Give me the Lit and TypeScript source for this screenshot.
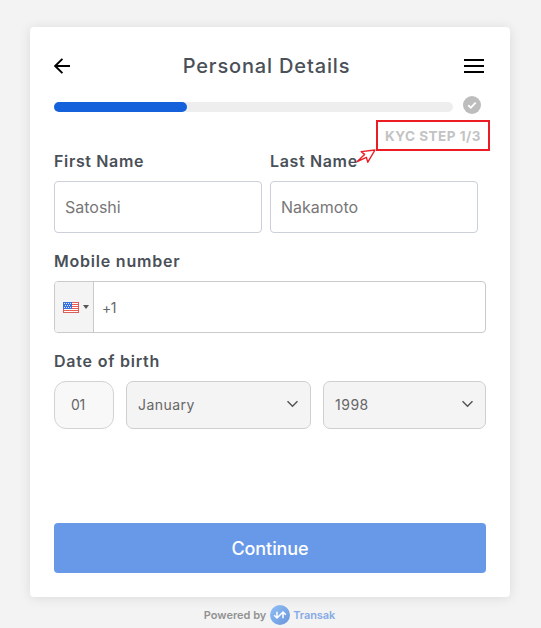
import { LitElement, html, css, svg } from "lit";
import { customElement, property } from "lit/decorators.js";

@customElement("select-box")
class SelectBox extends LitElement {
  @property() value = "";

  static styles = css`
    :host {
      display: flex;
      align-items: center;
      justify-content: space-between;
      box-sizing: border-box;
      height: 48px;
      padding: 0 12px 1px 11px;
      border: 1px solid #cfcfcf;
      border-radius: 7px;
      background: #f4f4f4;
      color: #666;
      font-size: 14px;
      line-height: 17px;
    }
    .chevron {
      display: block;
      margin-top: -1px;
    }
  `;

  render() {
    return html`<span>${this.value}</span>
      <svg class="chevron" width="11" height="8" viewBox="0 0 11 8" fill="none" stroke="#555" stroke-width="1.5">
        <path d="M.5 1.2 5.5 6.2l5-5" />
      </svg>`;
  }
}

@customElement("app-root")
class AppRoot extends LitElement {
  static styles = css`
    :host {
      display: flex;
      flex-direction: column;
      align-items: center;
      box-sizing: border-box;
      width: 541px;
      height: 628px;
      padding: 27px 31px 0 30px;
      overflow: hidden;
      background: #f3f3f3;
      font-family: Inter, "Noto Sans", sans-serif;
      color: #4a5058;
    }
    .card {
      display: flex;
      flex-direction: column;
      box-sizing: border-box;
      width: 480px;
      height: 570px;
      padding: 24px;
      border-radius: 4px;
      background: #fff;
      box-shadow: 0 1px 12px rgba(0, 0, 0, 0.1);
    }
    svg {
      display: block;
    }
    .header {
      display: flex;
      align-items: center;
      justify-content: space-between;
      height: 30px;
      padding-right: 2px;
    }
    .title {
      font-size: 20px;
      font-weight: 500;
      letter-spacing: 0.85px;
      line-height: 28px;
      margin: -1px 1px 0 0;
    }
    .progress {
      display: flex;
      align-items: center;
      gap: 10px;
      height: 18px;
      margin-top: 15px;
    }
    .track {
      width: 399px;
      height: 10px;
      margin-top: 4px;
      border-radius: 5px;
      background: #eee;
    }
    .fill {
      width: 133px;
      height: 10px;
      border-radius: 5px;
      background: #1461db;
    }
    .step-row {
      display: flex;
      justify-content: flex-end;
      height: 31px;
      margin: 6px -4px 0 0;
    }
    .step {
      position: relative;
      display: flex;
      align-items: center;
      justify-content: center;
      box-sizing: border-box;
      width: 114px;
      height: 31px;
      border: 2px solid #ec1c24;
      color: #c3c3c3;
      font-size: 13.5px;
      font-weight: 700;
      letter-spacing: 0.5px;
      white-space: nowrap;
    }
    .pointer {
      position: absolute;
      left: -23px;
      top: 26px;
    }
    .label {
      height: 20px;
      line-height: 20px;
      font-size: 16px;
      font-weight: 600;
      letter-spacing: 0.65px;
      white-space: nowrap;
    }
    .wide {
      letter-spacing: 0.78px;
    }
    .names {
      display: flex;
      gap: 8px;
    }
    .name {
      width: 208px;
    }
    .input {
      display: flex;
      align-items: center;
      box-sizing: border-box;
      height: 52px;
      margin-top: 10px;
      padding: 0 10px;
      border: 1px solid #ccd0d8;
      border-radius: 4px;
      color: #777;
      font-size: 16px;
      letter-spacing: 0;
    }
    .section {
      margin-top: 18px;
    }
    .phone {
      padding: 0;
      border-color: #cacaca;
      color: #666;
      font-size: 14px;
      letter-spacing: -0.4px;
    }
    .country {
      display: flex;
      align-items: center;
      gap: 4px;
      box-sizing: border-box;
      width: 39px;
      height: 50px;
      padding-left: 8px;
      margin-right: 8px;
      border-right: 1px solid #cacaca;
      border-radius: 3px 0 0 3px;
      background: #f4f4f4;
    }
    .dates {
      display: grid;
      grid-template-columns: 60px 185px 163px;
      gap: 12px;
      margin-top: 10px;
    }
    .day {
      display: flex;
      align-items: center;
      box-sizing: border-box;
      height: 48px;
      padding: 0 0 1px 16px;
      border: 1px solid #d3d3d3;
      border-radius: 12px;
      background: #f8f8f8;
      color: #666;
      font-size: 14px;
      line-height: 17px;
      letter-spacing: -0.4px;
    }
    .month {
      letter-spacing: 0.45px;
    }
    .year {
      letter-spacing: 0.5px;
    }
    .continue {
      display: flex;
      align-items: center;
      justify-content: center;
      height: 50px;
      margin-top: auto;
      border-radius: 4px;
      background: #6899e8;
      color: #fff;
      font-size: 18px;
      font-weight: 500;
      letter-spacing: -0.1px;
    }
    .footer {
      display: flex;
      align-items: center;
      height: 20px;
      margin: 8px 1px 0 0;
      font-size: 11px;
      font-weight: 600;
      color: #929292;
      white-space: nowrap;
    }
    .logo {
      margin: 0 3px 0 4px;
    }
    .brand {
      color: #86aae5;
      letter-spacing: -0.1px;
    }
  `;

  private flag() {
    const stripes = [2, 4, 6, 8];
    return html`<svg width="16" height="11" viewBox="0 0 16 11">
      <rect width="16" height="11" fill="#fff" />
      ${stripes.map((y) => svg`<path d=${`M0 ${y + 0.5}h16`} stroke="#ee5a50" />`)}
      <rect x=".5" y=".5" width="15" height="10" fill="none" stroke="#d9605a" />
      <rect width="9" height="7" fill="#3a72dc" />
      <path d="M1 1.5h7M2 3.5h6M1 5.5h7" stroke="#dce8ff" stroke-dasharray="1 1" />
    </svg>`;
  }

  render() {
    return html`
      <div class="card">
        <div class="header">
          <svg width="16" height="16" viewBox="0 0 16 16" fill="none" stroke="#000" stroke-width="1.9">
            <path d="M16 8H1.2M8.4.8 1.2 8l7.2 7.2" />
          </svg>
          <div class="title">Personal Details</div>
          <svg width="20" height="14" viewBox="0 0 20 14" stroke="#000" stroke-width="2">
            <path d="M0 1h20M0 7h20M0 13h20" />
          </svg>
        </div>
        <div class="progress">
          <div class="track"><div class="fill"></div></div>
          <svg width="18" height="18" viewBox="0 0 18 18">
            <circle cx="9" cy="9" r="9" fill="#bdbdbd" />
            <path d="m5.2 9.2 2.6 2.4 4.9-4.9" fill="none" stroke="#fff" stroke-width="1.9" />
          </svg>
        </div>
        <div class="step-row">
          <div class="step">
            KYC STEP 1/3
            <svg class="pointer" width="24" height="18" viewBox="0 0 24 18" fill="#fff" stroke="#ec1c24" stroke-width="1.4" stroke-linejoin="round">
              <path d="M20 2 6.2 3.6l3.4 2.8-7.4 7.2 9.2-4.2 1.4 4.8Z" />
            </svg>
          </div>
        </div>
        <div class="names">
          <div class="name">
            <div class="label">First Name</div>
            <div class="input">Satoshi</div>
          </div>
          <div class="name">
            <div class="label">Last Name</div>
            <div class="input">Nakamoto</div>
          </div>
        </div>
        <div class="section">
          <div class="label wide">Mobile number</div>
          <div class="input phone">
            <div class="country">
              ${this.flag()}
              <svg width="6" height="4" viewBox="0 0 6 4"><path d="M0 0h6L3 4z" fill="#555" /></svg>
            </div>
            +1
          </div>
        </div>
        <div class="section">
          <div class="label wide">Date of birth</div>
          <div class="dates">
            <div class="day">01</div>
            <select-box class="month" value="January"></select-box>
            <select-box class="year" value="1998"></select-box>
          </div>
        </div>
        <div class="continue">Continue</div>
      </div>
      <div class="footer">
        <span>Powered by</span>
        <svg class="logo" width="20" height="20" viewBox="0 0 20 20">
          <defs>
            <linearGradient id="g" x1="0" y1="0" x2="1" y2="1">
              <stop offset="0" stop-color="#8fc0f5" />
              <stop offset="1" stop-color="#6a94dc" />
            </linearGradient>
          </defs>
          <circle cx="10" cy="10" r="10" fill="url(#g)" />
          <path d="M7 6.8v6M4.2 10.2 7 13l6-6 2.8 2.8M13 7.2v6" fill="none" stroke="#fff" stroke-width="1.5" />
        </svg>
        <span class="brand">Transak</span>
      </div>
    `;
  }
}
